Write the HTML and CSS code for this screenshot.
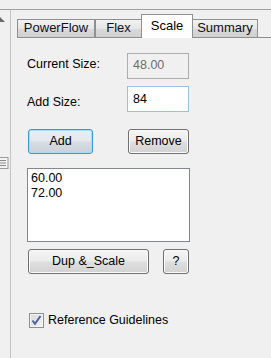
FILE: index.html
```html
<!DOCTYPE html>
<html lang="en">
<head>
    <meta charset="UTF-8">
    <meta name="viewport" content="width=device-width, initial-scale=1.0">
    <title>Scale</title>
    <link rel="stylesheet" href="styles.css">
</head>
<body>
    <div class="top-gap"></div>
    <div class="frame">
        <div class="dock-strip">
            <svg class="dock-arrow" width="6" height="6" viewBox="0 0 6 6">
                <polygon points="0,0 5,5 0,5" fill="#6a6a6a"/>
            </svg>
            <svg class="dock-grip" width="9" height="12" viewBox="0 0 9 12">
                <rect x="-1" y="0.5" width="9" height="11" fill="#f4f4f4" stroke="#9a9a9a"/>
                <line x1="0" y1="3.5" x2="6" y2="3.5" stroke="#8a8a8a"/>
                <line x1="0" y1="6" x2="6" y2="6" stroke="#8a8a8a"/>
                <line x1="0" y1="8.5" x2="6" y2="8.5" stroke="#8a8a8a"/>
            </svg>
        </div>

        <div class="main">
            <div class="tabs">
                <div class="tab tab-powerflow">PowerFlow</div>
                <div class="tab tab-flex">Flex</div>
                <div class="tab tab-scale selected">Scale</div>
                <div class="tab tab-summary">Summary</div>
            </div>

            <div class="pane">
                <div class="row row-current">
                    <label class="row-label" for="currentSize">Current Size:</label>
                    <input class="field field-readonly" id="currentSize" value="48.00" readonly>
                </div>
                <div class="row row-add">
                    <label class="row-label" for="addSize">Add Size:</label>
                    <input class="field field-edit" id="addSize" value="84">
                </div>

                <div class="button-row">
                    <button class="btn btn-default btn-add">Add</button>
                    <button class="btn btn-remove">Remove</button>
                </div>

                <div class="size-list">
                    <div class="size-item">60.00</div>
                    <div class="size-item">72.00</div>
                </div>

                <div class="button-row button-row-dup">
                    <button class="btn btn-dup">Dup &amp;_Scale</button>
                    <button class="btn btn-help">?</button>
                </div>

                <div class="check-row">
                    <span class="checkbox">
                        <svg width="11" height="11" viewBox="0 0 11 11">
                            <path d="M1.5 5.5 L4 8.8 L9.5 1" fill="none" stroke="#4a64a8" stroke-width="2"/>
                        </svg>
                    </span>
                    <span class="check-label">Reference Guidelines</span>
                </div>
            </div>
        </div>
    </div>
</body>
</html>
```

FILE: styles.css
```css
html, body {
    margin: 0;
    padding: 0;
}
body {
    background-color: #f0f0f0;
    font-family: "Liberation Sans", Arial, sans-serif;
    font-size: 12.5px;
    line-height: 15px;
    color: #000;
    width: 271px;
    height: 358px;
    overflow: hidden;
}
.top-gap {
    height: 9px;
    border-bottom: 1px solid #a0a0a0;
}
.frame {
    display: flex;
    height: 348px;
}
.dock-strip {
    width: 10px;
    border-right: 1px solid #c4c4c4;
    display: flex;
    flex-direction: column;
    padding-top: 7px;
    box-sizing: content-box;
}
.dock-arrow {
    display: block;
}
.dock-grip {
    display: block;
    margin-top: 134px;
}
.main {
    flex: 1;
    padding: 4px 0 0 6px;
}

/* tabs */
.tabs {
    display: flex;
    align-items: flex-end;
    height: 23px;
    border-bottom: 1px solid #8e8f8f;
}
.tab {
    box-sizing: border-box;
    height: 18px;
    border: 1px solid #8e8f8f;
    border-bottom: none;
    background: linear-gradient(#f2f2f2, #e6e6e6 50%, #dadada 50%, #d0d0d0);
    font-size: 13px;
    line-height: 15px;
    text-align: center;
    color: #101020;
}
.tab-powerflow { width: 78px; }
.tab-flex { width: 47px; }
.tab-scale { width: 52px; }
.tab-summary { width: 66px; }
.tab.selected {
    height: 24px;
    margin: 0 -1px -1px -1px;
    padding-top: 3px;
    background: #fff;
    color: #000;
    position: relative;
}

/* pane */
.pane {
    padding: 15px 0 0 10px;
}
.row {
    display: grid;
    grid-template-columns: 100px 62px;
    height: 26px;
    align-items: start;
}
.row-add {
    margin-top: 7px;
}
.row-current .row-label {
    margin-top: 4px;
}
.row-add .row-label {
    margin-top: 9px;
}
.field {
    box-sizing: border-box;
    width: 62px;
    height: 26px;
    margin: 0;
    padding: 3px 5px 6px;
    font-family: inherit;
    font-size: 12.5px;
    line-height: 15px;
    outline: none;
    border-radius: 0;
}
.field-readonly {
    background-color: #f0f0f0;
    border: 1px solid #adadad;
    color: #6d6d6d;
}
.field-edit {
    background-color: #fff;
    border: 1px solid #9dbfdf;
    padding-top: 4px;
    padding-bottom: 5px;
    color: #000;
}

/* buttons */
.button-row {
    display: flex;
    margin-top: 17px;
    height: 25px;
}
.btn {
    box-sizing: border-box;
    height: 25px;
    margin: 0;
    padding: 0;
    border: 1px solid #707070;
    border-radius: 3px;
    background: linear-gradient(#f4f4f4, #ececec 45%, #dedede 55%, #d2d2d2);
    box-shadow: inset 0 0 0 1px #fafafa;
    font-family: inherit;
    font-size: 12.5px;
    line-height: 15px;
    color: #000;
    text-align: center;
}
.btn-default {
    border-color: #3a9ad9;
    box-shadow: inset 0 0 0 1px #a6dcf6;
    background: linear-gradient(#eaf0f4, #e2e8ed 45%, #d5dce2 55%, #cad2d9);
}
.btn-add {
    width: 65px;
    margin-left: 1px;
}
.btn-remove {
    width: 61px;
    margin-left: 35px;
}
.button-row-dup {
    margin-top: 7px;
}
.btn-dup {
    width: 121px;
    margin-left: 1px;
}
.btn-help {
    width: 26px;
    margin-left: 14px;
}

/* list */
.size-list {
    box-sizing: border-box;
    width: 163px;
    height: 74px;
    margin-top: 14px;
    padding: 2px 3px;
    background-color: #fff;
    border: 1px solid #828790;
}

/* checkbox */
.check-row {
    display: flex;
    align-items: center;
    margin-top: 39px;
    margin-left: 2px;
    height: 15px;
}
.checkbox {
    box-sizing: border-box;
    width: 15px;
    height: 15px;
    border: 1px solid #8e8f8f;
    background: linear-gradient(135deg, #d8d8d8, #f6f6f6);
    box-shadow: inset 0 0 0 1px #f4f4f4;
    display: flex;
    align-items: center;
    justify-content: center;
}
.checkbox svg {
    display: block;
}
.check-label {
    margin-left: 4px;
}
```
